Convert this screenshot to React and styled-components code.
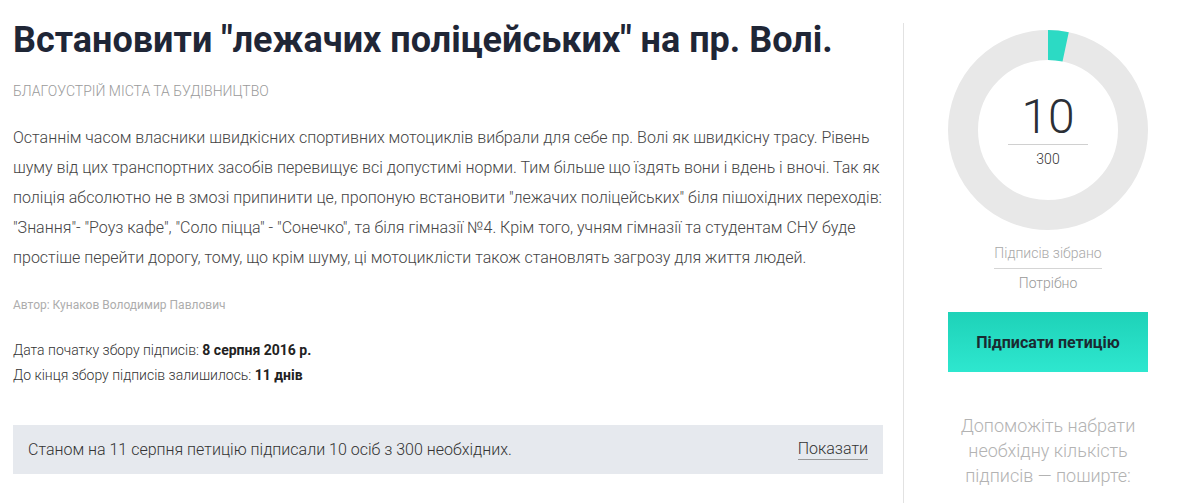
import React from 'react';
import styled, { createGlobalStyle } from 'styled-components';

const GlobalStyle = createGlobalStyle`
  body {
    margin: 0;
    background: #fff;
    font-family: Roboto, "Liberation Sans", sans-serif;
  }
`;

const petition = {
  title: 'Встановити "лежачих поліцейських" на пр. Волі.',
  category: 'Благоустрій міста та будівництво',
  text:
    'Останнім часом власники швидкісних спортивних мотоциклів вибрали для себе пр. Волі як швидкісну трасу. Рівень шуму від цих транспортних засобів перевищує всі допустимі норми. Тим більше що їздять вони і вдень і вночі. Так як поліція абсолютно не в змозі припинити це, пропоную встановити "лежачих поліцейських" біля пішохідних переходів: "Знання"- "Роуз кафе", "Соло піцца" - "Сонечко", та біля гімназії №4. Крім того, учням гімназії та студентам СНУ буде простіше перейти дорогу, тому, що крім шуму, ці мотоциклісти також становлять загрозу для життя людей.',
  author: 'Кунаков Володимир Павлович',
  startDate: '8 серпня 2016 р.',
  daysLeft: '11 днів',
  signed: 10,
  needed: 300,
};

const Donut = ({ value, total }) => {
  const r = 85;
  const c = 2 * Math.PI * r;
  const part = (value / total) * c;
  return (
    <svg width="200" height="200" viewBox="0 0 200 200">
      <circle cx="100" cy="100" r={r} fill="none" stroke="#e8e8e8" strokeWidth="30" />
      <circle
        cx="100"
        cy="100"
        r={r}
        fill="none"
        stroke="#2cdac4"
        strokeWidth="30"
        strokeDasharray={`${part} ${c}`}
        transform="rotate(-90 100 100)"
      />
    </svg>
  );
};

const App = () => {
  return (
    <>
      <GlobalStyle />
      <Page>
        <Main>
          <Title>{petition.title}</Title>
          <Category>{petition.category}</Category>
          <Body>{petition.text}</Body>
          <Author>Автор: {petition.author}</Author>
          <Meta>
            <MetaLine>
              Дата початку збору підписів: <b>{petition.startDate}</b>
            </MetaLine>
            <MetaLine>
              До кінця збору підписів залишилось: <b>{petition.daysLeft}</b>
            </MetaLine>
          </Meta>
          <StatusBar>
            <span>Станом на 11 серпня петицію підписали 10 осіб з 300 необхідних.</span>
            <ShowLink href="#">Показати</ShowLink>
          </StatusBar>
        </Main>

        <Sidebar>
          <ChartWrap>
            <Donut value={petition.signed} total={petition.needed} />
            <ChartCenter>
              <Count>{petition.signed}</Count>
              <Needed>{petition.needed}</Needed>
            </ChartCenter>
          </ChartWrap>
          <Collected>Підписів зібрано</Collected>
          <Required>Потрібно</Required>
          <SignButton>Підписати петицію</SignButton>
          <HelpText>Допоможіть набрати необхідну кількість підписів — поширте:</HelpText>
        </Sidebar>
      </Page>
    </>
  );
};

const Page = styled.div`
  display: flex;
  align-items: flex-start;
  padding-left: 13px;
  height: 503px;
  overflow: hidden;
`;

const Main = styled.div`
  width: 870px;
  padding-top: 19px;
  margin-right: 20px;
`;

const Title = styled.h1`
  margin: 0;
  font-size: 36px;
  line-height: 43px;
  font-weight: 700;
  color: #1f2636;
`;

const Category = styled.div`
  margin-top: 21px;
  font-size: 14px;
  line-height: 16px;
  font-weight: 300;
  text-transform: uppercase;
  color: #9a9a9a;
`;

const Body = styled.p`
  margin: 24px 0 0;
  font-size: 16px;
  line-height: 30px;
  font-weight: 300;
  color: #444;
`;

const Author = styled.div`
  margin-top: 25px;
  font-size: 12px;
  line-height: 14px;
  font-weight: 400;
  color: #adadad;
`;

const Meta = styled.div`
  margin-top: 26px;
`;

const MetaLine = styled.div`
  font-size: 14px;
  line-height: 25px;
  font-weight: 300;
  color: #333;

  b {
    font-weight: 700;
    color: #222;
  }
`;

const StatusBar = styled.div`
  margin-top: 37px;
  height: 49px;
  padding: 0 15px;
  background: #e6e9ee;
  display: flex;
  align-items: center;
  justify-content: space-between;
  font-size: 16px;
  font-weight: 300;
  color: #333;
`;

const ShowLink = styled.a`
  color: #333;
  text-decoration: none;
  border-bottom: 1px solid #999;
  padding-bottom: 1px;
`;

const Sidebar = styled.div`
  width: 288px;
  margin-top: 23px;
  padding: 7px 2px 0 0;
  height: 480px;
  border-left: 1px solid #e2e2e2;
  display: flex;
  flex-direction: column;
  align-items: center;
`;

const ChartWrap = styled.div`
  position: relative;
  width: 200px;
  height: 200px;
  svg {
    display: block;
  }
`;

const ChartCenter = styled.div`
  position: absolute;
  inset: 0;
  padding-top: 63px;
  display: flex;
  flex-direction: column;
  align-items: center;
`;

const Count = styled.div`
  width: 80px;
  text-align: center;
  font-size: 48px;
  line-height: 48px;
  font-weight: 300;
  color: #2b2f36;
  padding-bottom: 3px;
  border-bottom: 1px solid #d0d0d0;
`;

const Needed = styled.div`
  margin-top: 6px;
  font-size: 14px;
  line-height: 16px;
  font-weight: 300;
  color: #333;
`;

const Collected = styled.div`
  margin-top: 13px;
  font-size: 14px;
  line-height: 20px;
  font-weight: 300;
  color: #a8a8a8;
  padding-bottom: 5px;
  border-bottom: 1px solid #d5d5d5;
`;

const Required = styled.div`
  margin-top: 4px;
  font-size: 14px;
  line-height: 20px;
  font-weight: 300;
  color: #999;
`;

const SignButton = styled.button`
  margin-top: 19px;
  width: 200px;
  height: 60px;
  border: none;
  background: linear-gradient(180deg, #1ed2b8 0%, #2ee7cf 100%);
  font-family: Roboto, "Liberation Sans", sans-serif;
  font-size: 16px;
  font-weight: 700;
  color: #1a2a31;
  cursor: pointer;
`;

const HelpText = styled.div`
  margin-top: 41px;
  width: 200px;
  text-align: center;
  font-size: 18px;
  line-height: 25px;
  font-weight: 300;
  color: #b3b3b3;
`;

export default App;
